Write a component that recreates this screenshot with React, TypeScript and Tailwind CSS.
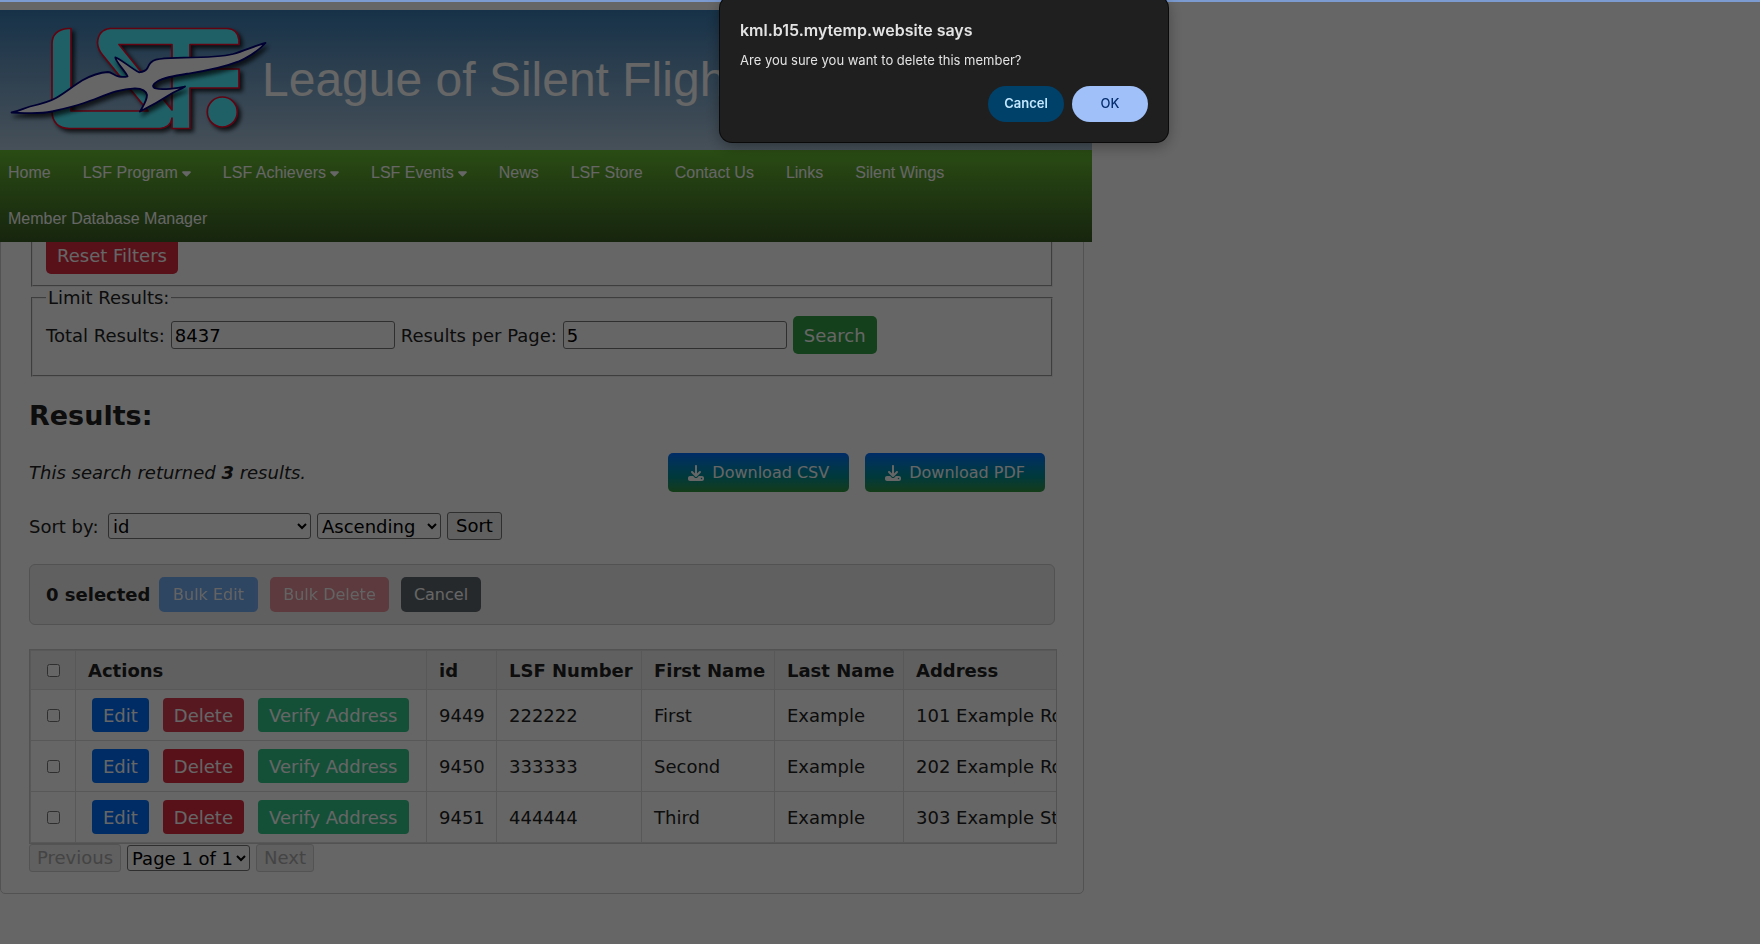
import type { ReactNode } from "react";
import { FaCaretDown, FaDownload } from "react-icons/fa6";

const navItems = [
  { label: "Home", menu: false },
  { label: "LSF Program", menu: true },
  { label: "LSF Achievers", menu: true },
  { label: "LSF Events", menu: true },
  { label: "News", menu: false },
  { label: "LSF Store", menu: false },
  { label: "Contact Us", menu: false },
  { label: "Links", menu: false },
  { label: "Silent Wings", menu: false },
  { label: "Member Database Manager", menu: false },
];

const members = [
  { id: "9449", lsf: "222222", first: "First", last: "Example", address: "101 Example Road" },
  { id: "9450", lsf: "333333", first: "Second", last: "Example", address: "202 Example Road" },
  { id: "9451", lsf: "444444", first: "Third", last: "Example", address: "303 Example Street" },
];

const columns = ["Actions", "id", "LSF Number", "First Name", "Last Name", "Address"];

function Logo() {
  return (
    <svg
      viewBox="0 10 262 140"
      className="h-[140px] w-[262px] shrink-0 overflow-visible"
      role="img"
      aria-label="LSF"
    >
      <g className="drop-shadow-[3px_3px_2px_rgba(0,0,0,0.75)]">
        <g fill="#4ef0ff" stroke="#f5082d" strokeWidth="1.7" strokeLinejoin="round">
          <path d="M71 28.5H68Q52 30 52 44V112Q53 128 69 128.5H160Q171 127 172 118V128.5H190V88H239V69H190V44.5H239V40Q238 29 227 28.5H110Q98 30 97.5 43Q98 50 103 55.500L148 111H71Z M119 44.500H172V110Z" fillRule="evenodd" />
          <circle cx="222.300" cy="112" r="15" />
        </g>
      </g>
      <g className="drop-shadow-[2px_4px_2px_rgba(0,0,0,0.7)]">
        <path
          d="M11.500 112.500C20 111 24 108 30 106.500C41 104 49 102 56 98C65 93 73 86 82 80.500C90 76 99 72.500 108 72C112 72 114 76 119 76.500C122 77 125 77 127.500 76.300C126 72 115 61 115.300 57.300C118 57 132 69 139 72.300C142 72 146 71 147.500 68C149 64 151 61 156 59.700C164 57.500 174 58 184 57.700C205 57.500 222 57 233 54C246 50 257 45 265.500 43C260 49 251 56 238 61.700C222 68 205 71 190 73.300C176 75.500 165 77 158 81C153 84 151 87 156 88.500C162 90 177 88.500 185 86.500C180 90 175 91 170 94.500C160 101 151 106 140 111.500C143 106 147 101 147 95C146 90 142 88.500 135 88.300C116 89 102 97 84 103C72 107 63 109 52 111.500C38 114.500 24 113 11.500 112.500Z"
          fill="#fff"
          stroke="#00007d"
          strokeWidth="1.8"
          strokeLinejoin="round"
        />
      </g>
    </svg>
  );
}

function Header() {
  return (
    <header className="flex h-[140px] items-center overflow-hidden bg-linear-to-b from-[#397db4] to-[#b0c8dc]">
      <Logo />
      <div className="text-[48px] whitespace-nowrap text-white">League of Silent Flight</div>
    </header>
  );
}

function Nav() {
  return (
    <nav className="flex flex-wrap bg-linear-to-b from-[#69be32] to-[#395c23] pr-[100px]">
      {navItems.map((item) => (
        <a key={item.label} href="#" className="flex h-[46px] items-center gap-1 pr-6 pl-2 text-[16px] text-white">
          {item.label}
          {item.menu && <FaCaretDown className="h-[14px] w-[9px]" />}
        </a>
      ))}
    </nav>
  );
}

function ActionButton({ className, children }: { className: string; children: ReactNode }) {
  return (
    <button type="button" className={`h-[34px] rounded-[4px] px-[11px] whitespace-nowrap text-white ${className}`}>
      {children}
    </button>
  );
}

function DownloadButton({ children }: { children: ReactNode }) {
  return (
    <button
      type="button"
      className="flex h-[39px] items-center gap-2 rounded-[5px] bg-linear-to-b from-[#006eff] to-[#32963c] px-5 text-[16px] text-white"
    >
      <FaDownload className="size-4" />
      {children}
    </button>
  );
}

function MembersTable() {
  return (
    <div className="mt-6 -mr-0.5 overflow-hidden border border-[#ccc]">
      <table className="w-[1200px] table-fixed border-collapse text-left">
        <colgroup>
          <col className="w-[45px]" />
          <col className="w-[351px]" />
          <col className="w-[70px]" />
          <col className="w-[145px]" />
          <col className="w-[133px]" />
          <col className="w-[129px]" />
          <col />
        </colgroup>
        <thead>
          <tr className="h-[39px] bg-[#f0f0f0]">
            <th className="border border-[#ddd] text-center">
              <input type="checkbox" aria-label="Select all" className="mx-auto block size-[13px]" />
            </th>
            {columns.map((c) => (
              <th key={c} className="border border-[#ddd] pl-3 font-bold whitespace-nowrap">
                {c}
              </th>
            ))}
          </tr>
        </thead>
        <tbody>
          {members.map((m, i) => (
            <tr key={m.id} className="h-[51px]">
              <td className="border border-[#ddd]">
                <input type="checkbox" aria-label={`Select ${m.id}`} className="mx-auto block size-[13px]" />
              </td>
              <td className="border border-[#ddd] pl-4">
                <div className="flex gap-[14px]">
                  <ActionButton className="bg-[#006eff]">Edit</ActionButton>
                  <ActionButton className={i === 0 ? "bg-[#dc3c52]" : "bg-[#dc2a40]"}>Delete</ActionButton>
                  <ActionButton className="bg-[#32c88c]">Verify Address</ActionButton>
                </div>
              </td>
              <td className="border border-[#ddd] pl-3">{m.id}</td>
              <td className="border border-[#ddd] pl-3">{m.lsf}</td>
              <td className="border border-[#ddd] pl-3">{m.first}</td>
              <td className="border border-[#ddd] pl-3">{m.last}</td>
              <td className="border border-[#ddd] pl-3 whitespace-nowrap">{m.address}</td>
            </tr>
          ))}
        </tbody>
      </table>
    </div>
  );
}

function ConfirmDialog() {
  return (
    <div
      role="alertdialog"
      aria-labelledby="confirm-title"
      aria-describedby="confirm-message"
      className="fixed -top-1 left-[720px] w-[448px] rounded-[12px] bg-[#1f1f1f] px-5 pt-[22px] pb-5 font-['Inter',sans-serif] text-[#e3e3e3] shadow-[0_0_0_1px_#0a0a0a,0_4px_16px_rgba(0,0,0,0.35)]"
    >
      <h2 id="confirm-title" className="text-[16px] leading-6 font-semibold">
        kml.b15.mytemp.website says
      </h2>
      <p id="confirm-message" className="mt-2 text-[13px] leading-5">
        Are you sure you want to delete this member?
      </p>
      <div className="mt-4 flex justify-end gap-2 text-[13px] font-semibold">
        <button type="button" className="h-9 w-[76px] rounded-full bg-[#00416a] text-[#c2e7ff]">
          Cancel
        </button>
        <button type="button" className="h-9 w-[76px] rounded-full bg-[#9fc0f8] font-medium text-[#062e6f]">
          OK
        </button>
      </div>
    </div>
  );
}

export default function App() {
  return (
    <div className="min-h-screen bg-white font-['Liberation_Sans',Arial,sans-serif]">
      <div className="max-w-[1092px] pt-[10px]">
        <div className="relative z-10">
          <Header />
          <Nav />
        </div>
        <main className="-mt-5 mr-2 rounded-[5px] border border-[#ccc] px-7 pb-[21px] font-['DejaVu_Sans',Verdana,sans-serif] text-[18px] leading-[27px] text-[#222]">
          <fieldset className="mx-0.5 border-2 border-[#f0f0f0] px-[13px] py-[11px] [border-style:groove]">
            <button type="button" className="block h-[38px] rounded-[5px] bg-[#dc2a40] px-[11px] text-white">
              Reset Filters
            </button>
          </fieldset>
          <fieldset className="mx-0.5 border-2 border-[#f0f0f0] px-[13px] pt-[7px] pb-[21px] [border-style:groove]">
            <legend className="px-0.5 leading-[22px]">Limit Results:</legend>
            <div className="flex items-center gap-1.5">
              <label htmlFor="total">Total Results:</label>
              <input
                id="total"
                defaultValue="8437"
                className="h-7 w-56 rounded-[3px] border border-[#767676] px-[3px] text-black"
              />
              <label htmlFor="per-page">Results per Page:</label>
              <input
                id="per-page"
                defaultValue="5"
                className="h-7 w-56 rounded-[3px] border border-[#767676] px-[3px] text-black"
              />
              <button type="button" className="h-[38px] rounded-[5px] bg-[#32a046] px-[11px] text-white">
                Search
              </button>
            </div>
          </fieldset>

          <h2 className="mt-[19px] text-[27px] leading-10 font-bold">Results:</h2>

          <div className="mt-[17px] flex items-center justify-between pr-[10px]">
            <p className="italic">
              This search returned <strong>3</strong> results.
            </p>
            <div className="flex gap-4">
              <DownloadButton>Download CSV</DownloadButton>
              <DownloadButton>Download PDF</DownloadButton>
            </div>
          </div>

          <div className="mt-5 flex items-center gap-1.5">
            <label htmlFor="sort-field" className="w-[73px]">
              Sort by:
            </label>
            <select
              id="sort-field"
              className="h-[26px] w-[203px] rounded-[3px] border border-[#767676] bg-white leading-6 text-black"
            >
              <option>id</option>
            </select>
            <select
              aria-label="Sort order"
              className="h-[26px] w-[124px] rounded-[3px] border border-[#767676] bg-white leading-6 text-black"
            >
              <option>Ascending</option>
              <option>Descending</option>
            </select>
            <button type="button" className="h-7 rounded-[3px] border border-[#767676] bg-[#efefef] px-2 leading-6 text-black">
              Sort
            </button>
          </div>

          <div className="mt-6 flex items-center gap-3 rounded-[6px] border border-[#ccc] bg-[#f0f0f0] px-4 py-3 text-[16px]">
            <strong className="w-[101px] text-[18px] whitespace-nowrap">0 selected</strong>
            <button type="button" disabled className="h-[35px] w-[99px] rounded-[5px] bg-[#006eff] text-white opacity-50">
              Bulk Edit
            </button>
            <button type="button" disabled className="h-[35px] w-[119px] rounded-[5px] bg-[#dc3545] text-white opacity-50">
              Bulk Delete
            </button>
            <button type="button" className="h-[35px] w-[80px] rounded-[5px] bg-[#5f686e] text-white">
              Cancel
            </button>
          </div>

          <MembersTable />

          <div className="flex items-center gap-1.5">
            <button type="button" disabled className="h-7 rounded-[3px] border border-[#d0d0d0] bg-[#efefef] px-[7px] leading-6 text-[#aaa]">
              Previous
            </button>
            <select
              aria-label="Page"
              className="h-[26px] w-[123px] rounded-[3px] border border-[#767676] bg-white leading-6 text-black"
            >
              <option>Page 1 of 1</option>
            </select>
            <button type="button" disabled className="h-7 rounded-[3px] border border-[#d0d0d0] bg-[#efefef] px-[7px] leading-6 text-[#aaa]">
              Next
            </button>
          </div>
        </main>
      </div>

      <div className="fixed inset-0 z-20 bg-black/60">
        <div className="h-0.5 bg-[#7b9bd1]" />
        <ConfirmDialog />
      </div>
    </div>
  );
}
